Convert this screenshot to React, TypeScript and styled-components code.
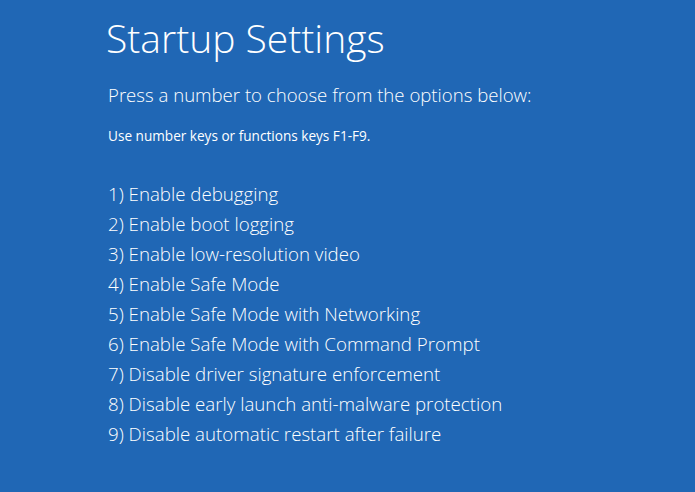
import React from "react";
import styled, { createGlobalStyle } from "styled-components";

const GlobalStyle = createGlobalStyle`
  html, body {
    margin: 0;
    padding: 0;
    background: #2067b5;
  }
  body {
    font-family: "Open Sans", "Noto Sans", "Liberation Sans", sans-serif;
    color: #ffffff;
  }
`;

const options = [
  "Enable debugging",
  "Enable boot logging",
  "Enable low-resolution video",
  "Enable Safe Mode",
  "Enable Safe Mode with Networking",
  "Enable Safe Mode with Command Prompt",
  "Disable driver signature enforcement",
  "Disable early launch anti-malware protection",
  "Disable automatic restart after failure",
];

const App = () => {
  return (
    <>
      <GlobalStyle />
      <Screen>
        <Title>Startup Settings</Title>
        <Prompt>Press a number to choose from the options below:</Prompt>
        <Hint>Use number keys or functions keys F1-F9.</Hint>
        <OptionList>
          {options.map((label, i) => (
            <Option key={label}>
              {i + 1}) {label}
            </Option>
          ))}
        </OptionList>
      </Screen>
    </>
  );
};

const Screen = styled.div`
  width: 695px;
  height: 492px;
  box-sizing: border-box;
  padding: 13px 0 0 106px;
  background: #2067b5;
  display: flex;
  flex-direction: column;
  overflow: hidden;
`;

const Title = styled.h1`
  margin: 0;
  font-size: 39px;
  font-weight: 300;
  line-height: 50px;
`;

const Prompt = styled.div`
  margin-top: 19px;
  margin-left: 2px;
  font-size: 18.6px;
  font-weight: 300;
  line-height: 26px;
`;

const Hint = styled.div`
  margin-top: 19px;
  margin-left: 2px;
  font-size: 13.6px;
  font-weight: 400;
  line-height: 18px;
`;

const OptionList = styled.ul`
  list-style: none;
  margin: 34px 0 0 2px;
  padding: 0;
`;

const Option = styled.li`
  font-size: 18.7px;
  font-weight: 300;
  line-height: 30px;
`;

export default App;
